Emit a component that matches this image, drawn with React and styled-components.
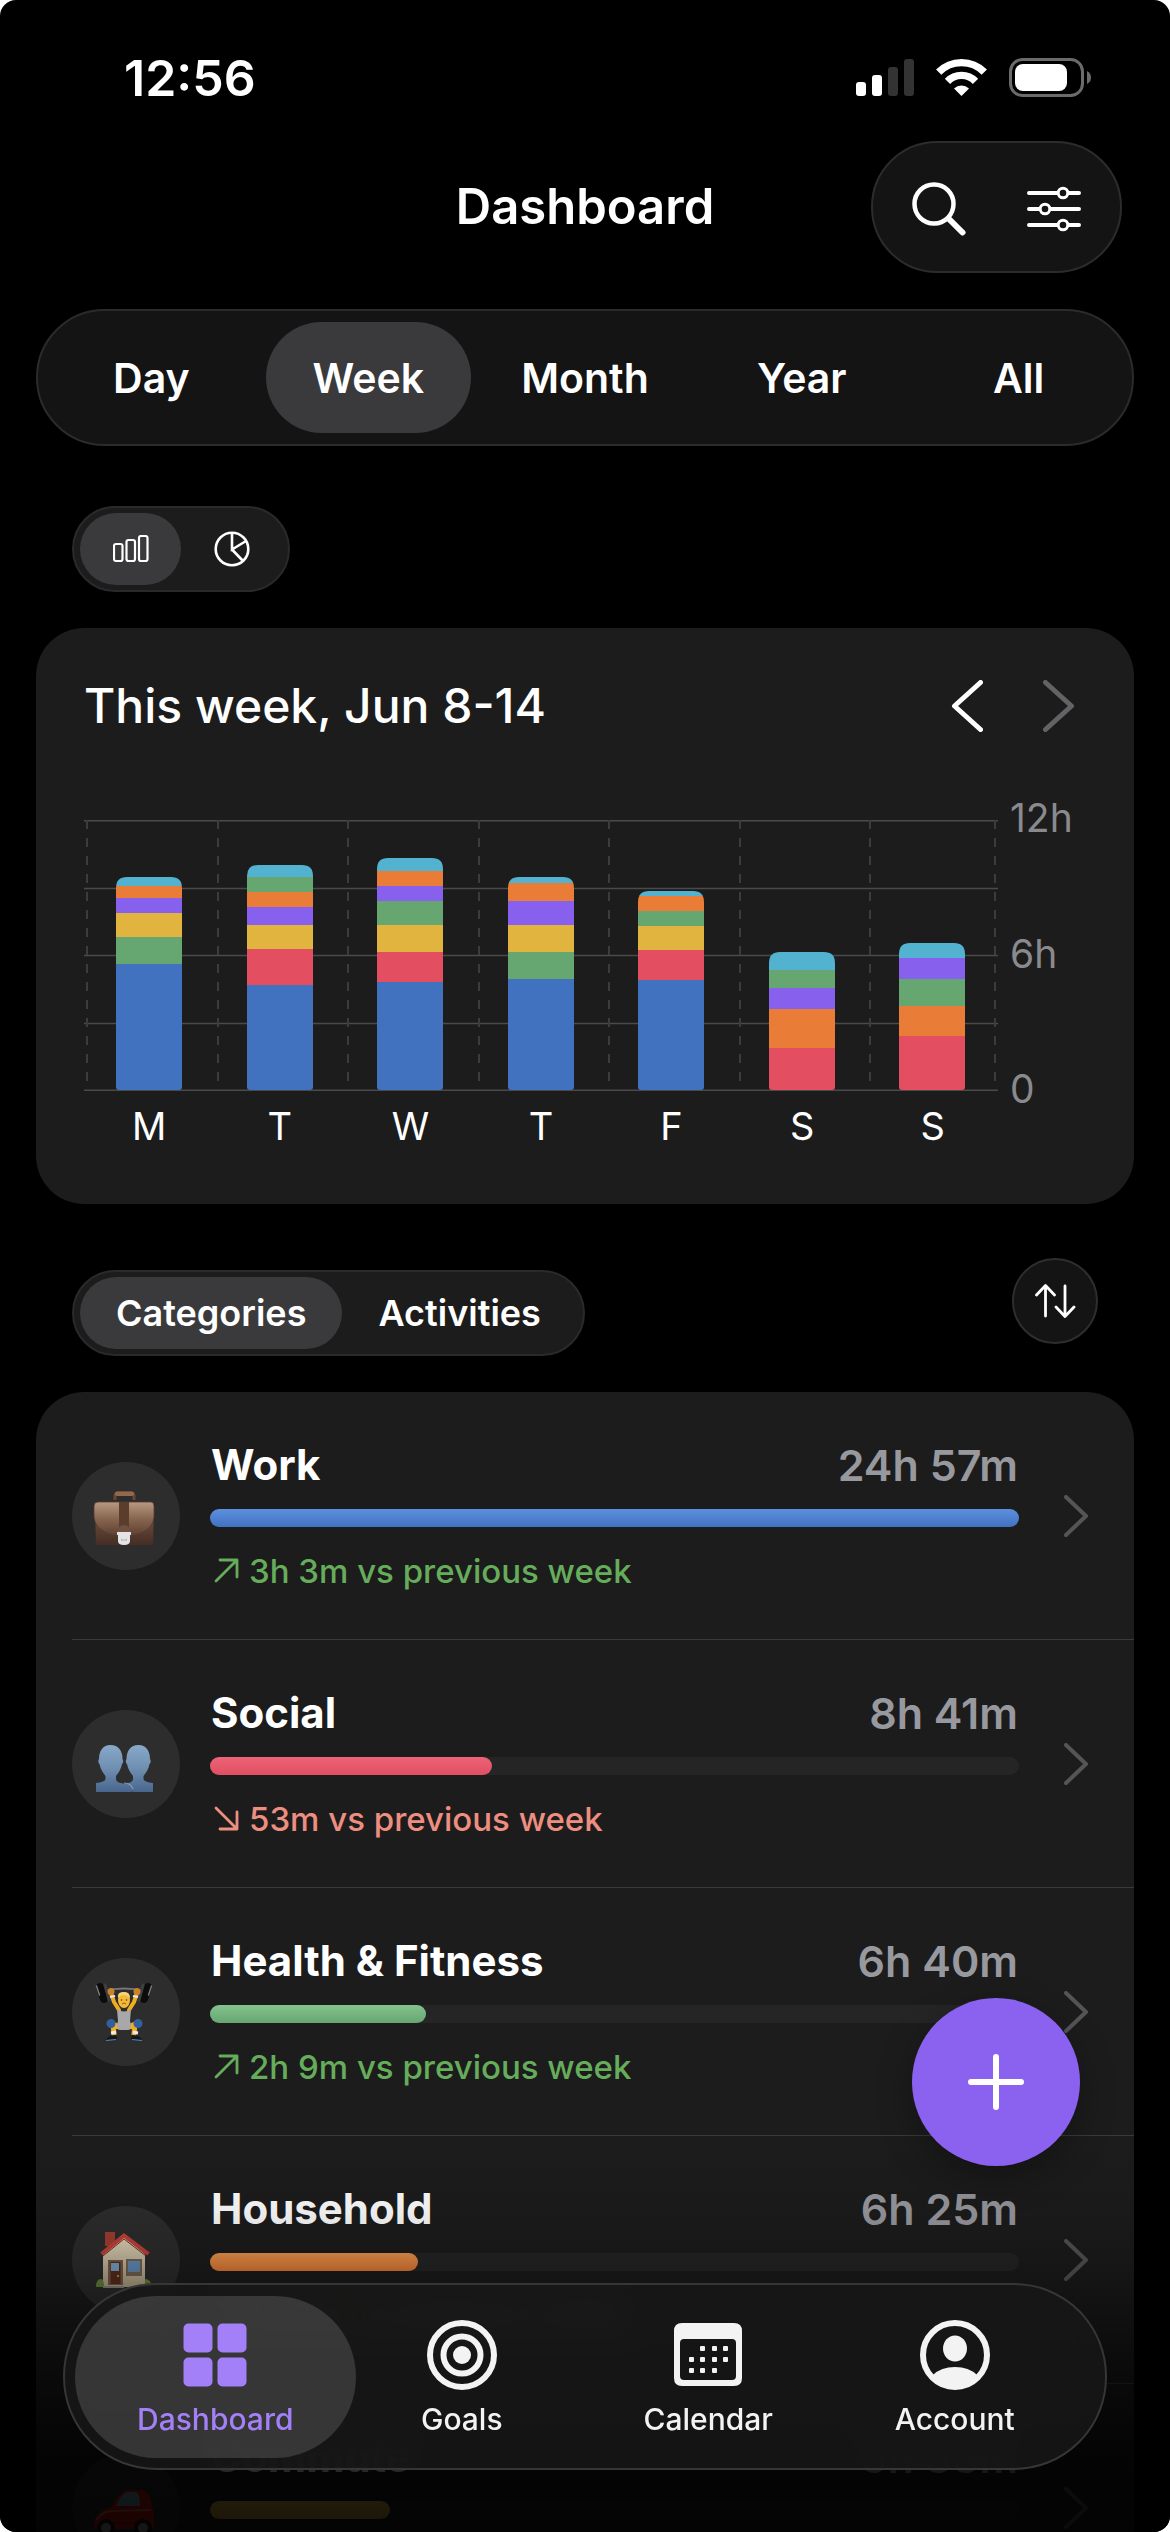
import React, { useState } from "react";
import styled, { createGlobalStyle } from "styled-components";

const color = {
  blue: "#4172c0",
  red: "#e34f61",
  green: "#66a671",
  yellow: "#e1b43f",
  purple: "#8860ee",
  orange: "#e97c36",
  cyan: "#52b2d0",
};

const GlobalStyle = createGlobalStyle`
  *, *::before, *::after { box-sizing: border-box; }
  body { margin: 0; background: #fff; }
  button { font: inherit; color: inherit; border: 0; background: none; padding: 0; cursor: pointer; }
  a { color: inherit; text-decoration: none; }
  svg { display: block; }
`;

const Screen = styled.div`
  position: relative;
  height: 100vh;
  overflow: hidden;
  border-radius: 16px;
  background: #000;
  color: #fff;
  font-family: Inter, "Liberation Sans", sans-serif;
`;

const Scroller = styled.main`
  height: 100%;
  overflow-y: auto;
  scrollbar-width: none;
`;

const StatusBar = styled.div`
  display: flex;
  align-items: center;
  justify-content: space-between;
  padding: 48px 78px 33px 124px;
`;

const Time = styled.time`
  font-size: 50px;
  line-height: 60px;
  font-weight: 600;
`;

const Header = styled.header`
  display: grid;
  grid-template-columns: 1fr auto 1fr;
  align-items: center;
  padding: 0 48px;
`;

const Title = styled.h1`
  grid-column: 2;
  margin: 0;
  font-size: 49px;
  line-height: 60px;
  font-weight: 600;
`;

const HeaderActions = styled.div`
  justify-self: end;
  display: flex;
  gap: 3px;
  padding: 4px 10px 0;
  height: 132px;
  border-radius: 66px;
  border: 2px solid #2c2c2c;
  background: #141414;
`;

const HeaderButton = styled.button`
  display: grid;
  place-items: center;
  width: 112px;
`;

const Periods = styled.nav`
  display: grid;
  grid-template-columns: repeat(5, 1fr);
  gap: 12px;
  margin: 36px 36px 0;
  padding: 11px;
  border: 2px solid #2b2b2b;
  border-radius: 69px;
  background: #141414;
`;

const Period = styled.button`
  height: 111px;
  border-radius: 56px;
  font-size: 41px;
  font-weight: 600;
  background: ${(p) => (p.$active ? "#3a3a3c" : "transparent")};
`;

const Toggle = styled.div`
  display: flex;
  width: max-content;
  height: 86px;
  padding: 5px 6px;
  border: 2px solid #2a2a2a;
  border-radius: 43px;
  background: #1c1c1c;
`;

const IconToggle = styled(Toggle)`
  margin: 60px 72px 0;
`;

const ToggleButton = styled.button`
  display: grid;
  place-items: center;
  min-width: 101px;
  padding: 0 ${(p) => (p.$text ? "36px" : "0")};
  border-radius: 36px;
  font-size: 36px;
  font-weight: 600;
  background: ${(p) => (p.$active ? "#3a3a3c" : "transparent")};
`;

const Card = styled.section`
  margin: 36px 36px 0;
  border-radius: 48px;
  background: #1c1c1c;
`;

const ChartCard = styled(Card)`
  padding: 48px 48px 55px;
`;

const ChartHead = styled.div`
  display: flex;
  align-items: center;
  justify-content: space-between;
  height: 60px;
  padding-right: 11px;
`;

const ChartTitle = styled.h2`
  margin: 0;
  font-size: 48px;
  line-height: 60px;
  font-weight: 500;
`;

const Arrows = styled.div`
  display: flex;
  gap: 60px;
`;

const Chart = styled.div`
  display: grid;
  grid-template-columns: 1fr 88px;
  margin-top: 84px;
`;

const Plot = styled.svg`
  width: 100%;
  height: auto;
`;

const Axis = styled.div`
  display: flex;
  flex-direction: column;
  justify-content: space-between;
  margin: -24px 0 -20px 12px;
  color: #8a8a8e;
  font-size: 39px;
  line-height: 44px;
`;

const Days = styled.div`
  display: grid;
  grid-template-columns: repeat(7, 1fr);
  margin-top: 12px;
  text-align: center;
  font-size: 38px;
  line-height: 46px;
`;

const ListHead = styled.div`
  display: flex;
  justify-content: space-between;
  height: 98px;
  margin: 54px 72px 0;
`;

const GroupToggle = styled(Toggle)`
  align-self: flex-end;
`;

const SortButton = styled.button`
  display: grid;
  place-items: center;
  width: 86px;
  height: 86px;
  border: 2px solid #2e2e2e;
  border-radius: 50%;
  background: #141414;
`;

const List = styled(Card)`
  padding-left: 36px;
  overflow: hidden;
`;

const Row = styled.a`
  display: flex;
  align-items: center;
  height: 248px;
  padding-right: 45px;
  border-bottom: 1px solid #3a3a3b;
`;

const Avatar = styled.span`
  flex: none;
  width: 108px;
  height: 108px;
  margin-right: 30px;
  border-radius: 50%;
  background: #2d2d2d;
`;

const RowBody = styled.div`
  flex: 1;
  height: 164px;
  padding-top: 4px;
`;

const RowTop = styled.div`
  display: flex;
  justify-content: space-between;
  padding: 0 1px;
  font-size: 42px;
  line-height: 54px;
  font-weight: 700;
`;

const Total = styled.span`
  color: #98989f;
  font-size: 43px;
  font-weight: 600;
`;

const Track = styled.div`
  height: 18px;
  margin: 17px 0;
  border-radius: 9px;
  background: #252525;
`;

const Fill = styled.div`
  height: 100%;
  border-radius: 9px;
  background: linear-gradient(${(p) => p.$from}, ${(p) => p.$to});
`;

const Delta = styled.div`
  display: flex;
  align-items: center;
  gap: 10px;
  padding-left: 4px;
  color: ${(p) => (p.$up ? "#66ad5b" : "#ed8e80")};
  font-size: 33px;
  line-height: 54px;
  font-weight: 500;
`;

const RowChevron = styled.span`
  margin-left: 45px;
`;

const Fade = styled.div`
  position: absolute;
  left: 0;
  right: 0;
  bottom: 0;
  height: 402px;
  pointer-events: none;
  background: linear-gradient(
    rgba(0, 0, 0, 0),
    rgba(0, 0, 0, 0.07) 20%,
    rgba(0, 0, 0, 0.2) 33%,
    rgba(0, 0, 0, 0.4) 45%,
    rgba(0, 0, 0, 0.66) 62%,
    rgba(0, 0, 0, 0.84) 80%,
    rgba(0, 0, 0, 0.88)
  );
`;

const AddButton = styled.button`
  position: absolute;
  right: 90px;
  bottom: 366px;
  display: grid;
  place-items: center;
  width: 168px;
  height: 168px;
  border-radius: 50%;
  background: #8b62f0;
  box-shadow: 0 12px 36px rgba(0, 0, 0, 0.3);
`;

const TabBar = styled.nav`
  position: absolute;
  left: 63px;
  right: 63px;
  bottom: 62px;
  display: grid;
  grid-template-columns: repeat(4, 1fr);
  height: 187px;
  padding: 11px 27px 10px;
  border: 2px solid #363636;
  border-radius: 93px;
  background: rgba(23, 23, 23, 0.86);
  backdrop-filter: blur(18px);
`;

const Tab = styled.a`
  position: relative;
  display: flex;
  flex-direction: column;
  align-items: center;
  padding-top: 24px;
  color: ${(p) => (p.$active ? "#a480f8" : "#f3f3f3")};
  font-size: 30px;
  line-height: 36px;
  font-weight: 500;

  &::before {
    content: "";
    position: absolute;
    inset: 0 -17px;
    border-radius: 81px;
    background: ${(p) => (p.$active ? "rgba(255, 255, 255, 0.14)" : "transparent")};
  }
`;

const TabLabel = styled.span`
  position: relative;
  margin-top: 11px;
`;

const TabIcon = styled.svg`
  position: relative;
`;

function StatusIcons() {
  return (
    <svg width="236" height="40" viewBox="0 0 236 40" aria-hidden="true">
      <rect x="0" y="24" width="10" height="14" rx="3" fill="#fff" />
      <rect x="16" y="17" width="10" height="21" rx="3" fill="#fff" />
      <rect x="32" y="9" width="10" height="29" rx="3" fill="#333" />
      <rect x="48" y="1" width="10" height="37" rx="3" fill="#333" />
      <g fill="none" stroke="#fff" strokeWidth="7.4">
        <path d="M82.7 14.2a32 32 0 0 1 45.6 0" />
        <path d="M91.5 23.3a19.5 19.5 0 0 1 28 0" />
      </g>
      <path d="M98 30.5a10.7 10.7 0 0 1 15 0L105.5 38z" fill="#fff" />
      <rect x="154.500" y="1.500" width="72" height="36" rx="12" fill="none" stroke="#6b6b6b" strokeWidth="3" />
      <rect x="159" y="6" width="52" height="27" rx="8" fill="#fff" />
      <path d="M231 13q4 2 4 6.500t-4 6.500z" fill="#6b6b6b" />
    </svg>
  );
}

function Chevron({ left, w, h, stroke, width }) {
  const i = width / 2;
  const d = left
    ? `M${w - i} ${i}L${i + 1} ${h / 2}L${w - i} ${h - i}`
    : `M${i} ${i}L${w - i - 1} ${h / 2}L${i} ${h - i}`;
  return (
    <svg width={w} height={h} viewBox={`0 0 ${w} ${h}`} fill="none" stroke={stroke} strokeWidth={width} strokeLinecap="round" strokeLinejoin="round" aria-hidden="true">
      <path d={d} />
    </svg>
  );
}

/* Segments run from the baseline up, in plot units (271 = 12 hours). */
const days = [
  ["M", [["blue", 126], ["green", 27], ["yellow", 24], ["purple", 15], ["orange", 12], ["cyan", 9]]],
  ["T", [["blue", 105], ["red", 36], ["yellow", 24], ["purple", 18], ["orange", 15], ["green", 15], ["cyan", 12]]],
  ["W", [["blue", 108], ["red", 30], ["yellow", 27], ["green", 24], ["purple", 15], ["orange", 15], ["cyan", 13]]],
  ["T", [["blue", 111], ["green", 27], ["yellow", 27], ["purple", 24], ["orange", 18], ["cyan", 6]]],
  ["F", [["blue", 110], ["red", 30], ["yellow", 24], ["green", 15], ["orange", 15], ["cyan", 5]]],
  ["S", [["red", 42], ["orange", 39], ["purple", 21], ["green", 18], ["cyan", 18]]],
  ["S", [["red", 54], ["orange", 30], ["green", 27], ["purple", 21], ["cyan", 15]]],
];

function BarPlot() {
  return (
    <Plot viewBox="0 0 914 271" role="img" aria-label="Hours tracked per day">
      <g stroke="#4a4a4b" strokeWidth="1.500">
        {[0.75, 68.5, 135.5, 203.5, 270.25].map((y) => (
          <line key={y} x1="0" x2="914" y1={y} y2={y} />
        ))}
      </g>
      <g stroke="#3c3c3d" strokeWidth="2" strokeDasharray="9 9">
        {[3, 134, 264, 395, 525, 656, 786, 911].map((x) => (
          <line key={x} x1={x} x2={x} y1="0" y2="264" />
        ))}
      </g>
      {days.map(([, parts], i) => {
        const x = 32 + Math.round(i * 130.5);
        const total = parts.reduce((s, p) => s + p[1], 0);
        const top = 270 - total;
        let y = 270;
        return (
          <g key={i}>
            <clipPath id={`bar${i}`}>
              <path d={`M${x} ${top + 11}q0-11 11-11h44q11 0 11 11V267q0 3-3 3h-60q-3 0-3-3z`} />
            </clipPath>
            <g clipPath={`url(#bar${i})`}>
              {parts.map(([name, h]) => {
                y -= h;
                return <rect key={name} x={x} y={y} width="66" height={h} fill={color[name]} shapeRendering="crispEdges" />;
              })}
            </g>
          </g>
        );
      })}
    </Plot>
  );
}

function Briefcase() {
  return (
    <svg viewBox="0 0 108 108" aria-hidden="true">
      <defs>
        <linearGradient id="bcFlap" x2="0" y2="1"><stop stopColor="#b89a80" /><stop offset=".5" stopColor="#87654f" /><stop offset="1" stopColor="#5c3f32" /></linearGradient>
        <linearGradient id="bcBody" x2="0" y2="1"><stop stopColor="#84614c" /><stop offset="1" stopColor="#452d24" /></linearGradient>
      </defs>
      <path d="M43 38v-4q0-3 3-3h13q3 0 3 3v4" fill="none" stroke="#6b4734" strokeWidth="3" />
      <rect x="43" y="29.500" width="19" height="4.500" rx="2" fill="#93694e" />
      <path d="M24 41h56l2 6-1 36H24l-1-36z" fill="url(#bcBody)" />
      <path d="M26 40h53q3 0 3 4v11q-2 18-30 19Q24 73 22 55V44q0-4 4-4z" fill="url(#bcFlap)" stroke="#553a2d" strokeWidth=".8" />
      <path d="M47 40h10v26H47z" fill="#5b3d2e" />
      <path d="M46 70q0-7 6-7t6 7z" fill="#70503f" />
      <path d="M45 70h14v3h-1v6q0 4-6 4t-6-4v-6h-1z" fill="#e4e4e4" />
      <path d="M49 76q3 3 6 0v3h-6z" fill="#c4c4c6" />
    </svg>
  );
}

function People() {
  return (
    <svg viewBox="0 0 108 108" aria-hidden="true">
      <defs><linearGradient id="ppl" gradientUnits="userSpaceOnUse" x1="0" y1="35" x2="0" y2="82"><stop stopColor="#88a9c8" /><stop offset=".5" stopColor="#6f8fb2" /><stop offset="1" stopColor="#49658d" /></linearGradient></defs>
      <g fill="url(#ppl)">
        <path d="M38.500 35c8 0 12 6 12 14 1 1 1 4-.5 5-1 5-3 8-6 12v3q0 3 5 4 8 1 11 9H24V73q9-1 9.500-4v-3c-3-4-5-7-6-12-1.500-1-1.500-4-.5-5 0-8 4-14 11.500-14z" />
        <path d="M66.500 35c-8 0-12 6-12 14-1 1-1 4 .5 5 1 5 3 8 6 12v3q0 3-5 4l-6 1 11 8h20V73q-9-1-9.500-4v-3c3-4 5-7 6-12 1.500-1 1.500-4 .5-5 0-8-4-14-11.500-14z" />
      </g>
      <path d="M52 73q7 0 9 6" fill="none" stroke="#7f9fc0" strokeWidth="1.200" />
    </svg>
  );
}

function Lifter() {
  return (
    <svg viewBox="0 0 108 108" aria-hidden="true">
      <path d="M32 33q20-5 40 0" fill="none" stroke="#77777a" strokeWidth="2" />
      <g strokeLinecap="round">
        <path d="M28 29l4 12M76 29l-4 12" stroke="#0c0c0c" strokeWidth="8" />
        <path d="M33 27l4 15M71 27l-4 15" stroke="#3d3e40" strokeWidth="3" />
        <path d="M24.500 28l3 9M79.500 28l-3 9" stroke="#7a7a7a" strokeWidth="1.500" />
      </g>
      <g fill="none" stroke="#f0ad22" strokeLinecap="round" strokeLinejoin="round">
        <path d="M39 35l3 9 5 8M65 35l-3 9-5 8" strokeWidth="4" />
        <path d="M47 69l-6-3 1 10M57 69l6-3-1 10" strokeWidth="5" />
      </g>
      <circle cx="39" cy="33.500" r="3.500" fill="#c98329" /><circle cx="65" cy="33.500" r="3.500" fill="#c98329" />
      <path d="M38 39l5-1M66 39l-5-1" stroke="#e9e9e9" strokeWidth="2" />
      <path d="M45 51q7 5 14 0l-1 12q3 8-2 9h-8q-5-1-2-9z" fill="#a8a8aa" />
      <ellipse cx="52" cy="42" rx="6" ry="8" fill="#f4ba36" />
      <path d="M46 40q-1-6 5-6 7-1 7 6-3-3-6-3-4 0-6 3z" fill="#f6d37c" />
      <path d="M50 46q2-2 4 0" fill="none" stroke="#9b5b16" />
      <circle cx="49.500" cy="42" r=".8" fill="#5c3a17" /><circle cx="54.500" cy="42" r=".8" fill="#5c3a17" />
      <circle cx="39" cy="65.500" r="4.500" fill="#315f9f" /><circle cx="66" cy="65.500" r="4.500" fill="#315f9f" />
      <path d="M39 75l5-1M61 74l5 1" stroke="#e7edf4" strokeWidth="3" />
      <path d="M34 82q2-5 10-5l1 4zM70 82q-2-5-10-5l-1 4z" fill="#15171b" />
      <path d="M34 82.500l10-1M70 82.500l-10-1" stroke="#4a85c4" strokeWidth="1.200" />
    </svg>
  );
}

function House() {
  return (
    <svg viewBox="0 0 108 108" aria-hidden="true">
      <defs><linearGradient id="hs" x2="0" y2="1"><stop stopColor="#e6d9bd" /><stop offset="1" stopColor="#b7a98a" /></linearGradient></defs>
      <path d="M33 26h10v14H33z" fill="#a53e33" />
      <path d="M52 31l21 17v33H31V48z" fill="url(#hs)" />
      <path d="M29.500 48L52 29.500 76.500 48" fill="none" stroke="#c5433a" strokeWidth="4" />
      <path d="M31 50l21-17 22 17" fill="none" stroke="#7e2e27" strokeWidth="1" />
      <path d="M36 54h15v25H36z" fill="#785b48" /><path d="M38.500 56h10v22h-10z" fill="#5a2c1d" />
      <path d="M39 57h8v8h-8z" fill="#79a9cb" /><circle cx="46" cy="70" r="1" fill="#e4b13b" />
      <path d="M54 53h16v17H54z" fill="#796653" /><path d="M56 55h12v11H56z" fill="#668fbd" />
      <path d="M24 81q0-8 5-8 3 0 3 8zM73 73q6 0 7 8h-7z" fill="#68883a" />
      <path d="M31 80h21v2H31z" fill="#8d8980" />
    </svg>
  );
}

function Car() {
  return (
    <svg viewBox="0 0 108 108" aria-hidden="true">
      <path d="M22 75q-1-13 9-19l9-3q6-14 14-17h16q8 1 10 17 3 6 2 22z" fill="#d4150f" />
      <path d="M44 52q5-12 11-14h9q4 1 4 14z" fill="#6faabd" />
      <path d="M24 66q6-9 18-9l37-1" fill="none" stroke="#e8685a" strokeWidth="2" />
      <path d="M29 69h46" stroke="#8d0e0c" />
      <circle cx="34" cy="74" r="9" fill="#191919" /><circle cx="34" cy="74" r="5" fill="#aaa" />
      <circle cx="71" cy="74" r="9" fill="#191919" /><circle cx="71" cy="74" r="5" fill="#aaa" />
    </svg>
  );
}

const categories = [
  { name: "Work", total: "24h 57m", share: 100, from: "#5c90de", to: "#4272c3", up: true, delta: "3h 3m", Icon: Briefcase },
  { name: "Social", total: "8h 41m", share: 34.8, from: "#ee6378", to: "#e04f62", up: false, delta: "53m", Icon: People },
  { name: "Health & Fitness", total: "6h 40m", share: 26.7, from: "#84c28e", to: "#66a671", up: true, delta: "2h 9m", Icon: Lifter },
  { name: "Household", total: "6h 25m", share: 25.7, from: "#f49a50", to: "#e97c36", up: true, delta: "1h 2m", Icon: House },
  { name: "Commute", total: "5h 33m", share: 22.2, from: "#edc251", to: "#e1b43f", Icon: Car },
];

function CategoryRow({ name, total, share, from, to, up, delta, Icon }) {
  return (
    <Row href="#">
      <Avatar><Icon /></Avatar>
      <RowBody>
        <RowTop>
          <span>{name}</span>
          <Total>{total}</Total>
        </RowTop>
        <Track>
          <Fill $from={from} $to={to} style={{ width: `${share}%` }} />
        </Track>
        {delta && (
          <Delta $up={up}>
            <svg width="25" height="25" viewBox="0 0 25 25" fill="none" stroke="currentColor" strokeWidth="2.800" strokeLinecap="round" strokeLinejoin="round" aria-hidden="true">
              <path d={up ? "M2 23L23 2M6 2h17v17" : "M2 2l21 21M6 23h17V6"} />
            </svg>
            <span>{delta} vs previous week</span>
          </Delta>
        )}
      </RowBody>
      <RowChevron><Chevron w={25} h={42} stroke="#555557" width={4} /></RowChevron>
    </Row>
  );
}

const tabs = [
  ["Dashboard", (
    <g fill="currentColor" key="d">
      <rect x="3" y="3" width="29" height="29" rx="5" /><rect x="37" y="3" width="29" height="29" rx="5" />
      <rect x="3" y="37" width="29" height="29" rx="5" /><rect x="37" y="37" width="29" height="29" rx="5" />
    </g>
  )],
  ["Goals", (
    <g fill="none" stroke="currentColor" strokeWidth="6" key="g">
      <circle cx="35" cy="35" r="32" /><circle cx="35" cy="35" r="18.500" /><circle cx="35" cy="35" r="9" fill="currentColor" stroke="none" />
    </g>
  )],
  ["Calendar", (
    <g fill="currentColor" key="c">
      <path fillRule="evenodd" d="M9 3h52q8 0 8 8v47q0 8-8 8H9q-8 0-8-8V11q0-8 8-8zm2 16q-4 0-4 4v33q0 4 4 4h48q4 0 4-4V23q0-4-4-4z" />
      {[[27, 26], [39, 26], [50, 26], [16, 37], [27, 37], [39, 37], [50, 37], [16, 48], [27, 48], [39, 48]].map(([x, y]) => (
        <rect key={`${x}-${y}`} x={x} y={y} width="5" height="5" rx="1" />
      ))}
    </g>
  )],
  ["Account", (
    <g key="a">
      <circle cx="35" cy="35" r="32" fill="none" stroke="currentColor" strokeWidth="6" />
      <ellipse cx="35" cy="28.500" rx="12" ry="13" fill="currentColor" />
      <path d="M13 55q8-8 22-8t22 8q-8 13-22 13T13 55z" fill="currentColor" />
    </g>
  )],
];

export default function App() {
  const [period, setPeriod] = useState("Week");
  const [view, setView] = useState("bars");
  const [group, setGroup] = useState("Categories");
  return (
    <Screen>
      <GlobalStyle />
      <Scroller>
        <StatusBar>
          <Time>12:56</Time>
          <StatusIcons />
        </StatusBar>
        <Header>
          <Title>Dashboard</Title>
          <HeaderActions>
            <HeaderButton aria-label="Search">
              <svg width="54" height="54" viewBox="0 0 54 54" fill="none" stroke="#fff" strokeLinecap="round">
                <circle cx="22" cy="22" r="19.500" strokeWidth="4.500" />
                <path d="M37 37l13.500 13.500" strokeWidth="6" />
              </svg>
            </HeaderButton>
            <HeaderButton aria-label="Filters">
              <svg width="54" height="46" viewBox="0 0 54 46" fill="#141414" stroke="#fff" strokeLinecap="round">
                <path d="M2 7h50M2 23h50M2 39h50" strokeWidth="4" />
                <g strokeWidth="3"><circle cx="36" cy="7" r="4.800" /><circle cx="18" cy="23" r="4.800" /><circle cx="36" cy="39" r="4.800" /></g>
              </svg>
            </HeaderButton>
          </HeaderActions>
        </Header>

        <Periods aria-label="Period">
          {["Day", "Week", "Month", "Year", "All"].map((p) => (
            <Period key={p} $active={p === period} aria-pressed={p === period} onClick={() => setPeriod(p)}>{p}</Period>
          ))}
        </Periods>

        <IconToggle>
          <ToggleButton $active={view === "bars"} aria-label="Bar chart" aria-pressed={view === "bars"} onClick={() => setView("bars")}>
            <svg width="36" height="28" viewBox="0 0 36 28" fill="none" stroke="#fff" strokeWidth="2.200">
              <rect x="1" y="9" width="8.500" height="17" rx="2" /><rect x="13.500" y="5" width="8.500" height="21" rx="2" /><rect x="26" y="1" width="8.500" height="25" rx="2" />
            </svg>
          </ToggleButton>
          <ToggleButton $active={view === "pie"} aria-label="Pie chart" aria-pressed={view === "pie"} onClick={() => setView("pie")}>
            <svg width="36" height="36" viewBox="0 0 36 36" fill="none" stroke="#fff" strokeWidth="2.600">
              <circle cx="18" cy="18" r="16.300" /><path d="M18 2v16.500l14-8.500M18 18.500L29 30" />
            </svg>
          </ToggleButton>
        </IconToggle>

        <ChartCard>
          <ChartHead>
            <ChartTitle>This week, Jun 8-14</ChartTitle>
            <Arrows>
              <button aria-label="Previous week"><Chevron left w={32} h={52} stroke="#fff" width={5} /></button>
              <button aria-label="Next week" disabled><Chevron w={32} h={52} stroke="#636365" width={5} /></button>
            </Arrows>
          </ChartHead>
          <Chart>
            <BarPlot />
            <Axis><span>12h</span><span>6h</span><span>0</span></Axis>
            <Days>{days.map(([d], i) => <span key={i}>{d}</span>)}</Days>
          </Chart>
        </ChartCard>

        <ListHead>
          <GroupToggle>
            {["Categories", "Activities"].map((g) => (
              <ToggleButton key={g} $text $active={g === group} aria-pressed={g === group} onClick={() => setGroup(g)}>{g}</ToggleButton>
            ))}
          </GroupToggle>
          <SortButton aria-label="Sort">
            <svg width="42" height="34" viewBox="0 0 42 34" fill="none" stroke="#fff" strokeWidth="2.800" strokeLinecap="round" strokeLinejoin="round">
              <path d="M11.500 32V2M2.500 11l9-9.500 9 9.500M31 2v30M22 23l9 9.500 9-9.500" />
            </svg>
          </SortButton>
        </ListHead>

        <List>
          {categories.map((c) => <CategoryRow key={c.name} {...c} />)}
        </List>
      </Scroller>

      <Fade />
      <AddButton aria-label="Add">
        <svg width="58" height="58" viewBox="0 0 58 58" stroke="#fff" strokeWidth="6" strokeLinecap="round"><path d="M29 4v50M4 29h50" /></svg>
      </AddButton>
      <TabBar aria-label="Main">
        {tabs.map(([label, icon], i) => (
          <Tab key={label} href="#" $active={i === 0}>
            <TabIcon width="70" height="70" viewBox={i === 0 ? "-0.5 -0.5 70 70" : "0 0 70 70"} aria-hidden="true">{icon}</TabIcon>
            <TabLabel>{label}</TabLabel>
          </Tab>
        ))}
      </TabBar>
    </Screen>
  );
}
